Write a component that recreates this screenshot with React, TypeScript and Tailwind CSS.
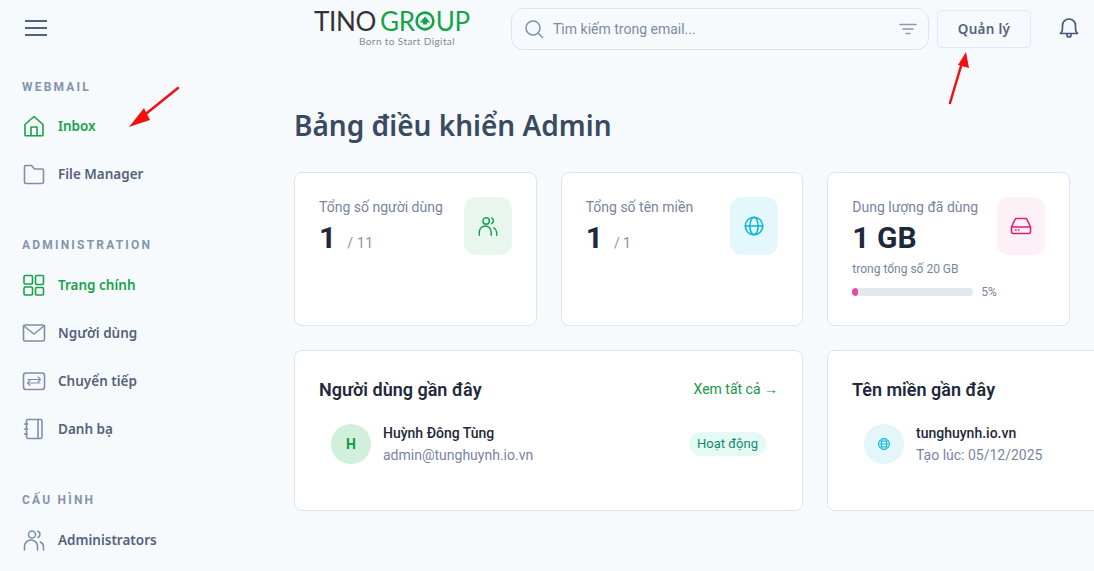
import React from "react";

const navFont = "font-['Noto_Sans','Open_Sans',sans-serif]";

function Ico({ children, size = 24, className = "" }: { children: React.ReactNode; size?: number; className?: string }) {
  return (
    <svg width={size} height={size} viewBox="0 0 24 24" fill="none" stroke="currentColor" strokeWidth="1.6" strokeLinecap="round" strokeLinejoin="round" className={className}>
      {children}
    </svg>
  );
}

const HomeI = () => (
  <Ico><path d="M3 10.5 12 2.5l9 8V21a.8.8 0 0 1-.8.8H3.800A.8.800 0 0 1 3 21z" /><path d="M9 21.500V13h6v8.500" /></Ico>
);
const FolderI = () => (
  <Ico><path d="M2.500 5a1.500 1.500 0 0 1 1.500-1.500h5.500l3 3.500H20a1.500 1.500 0 0 1 1.500 1.500V20a1.500 1.500 0 0 1-1.500 1.500H4A1.500 1.500 0 0 1 2.500 20z" /></Ico>
);
const GridI = () => (
  <Ico>
    <rect x="2" y="2.500" width="8.500" height="8.500" rx="1.200" />
    <rect x="13.500" y="2.500" width="8" height="9" rx="1.200" />
    <rect x="2" y="14" width="8.500" height="8" rx="1.200" />
    <rect x="13.500" y="14.500" width="8" height="7.500" rx="1.200" />
  </Ico>
);
const MailI = () => (
  <Ico><rect x="1.500" y="4" width="21" height="16" rx="1.500" /><path d="m2 5 10 8 10-8" /></Ico>
);
const ForwardI = () => (
  <Ico>
    <rect x="1.500" y="4" width="21" height="16.500" rx="2.500" />
    <path d="M6 14h12M8 11.500 5.500 14 8 16.500" strokeWidth="1.100" />
    <path d="M6 10.500h12M16 8l2.500 2.500L16 13" strokeWidth="1.100" />
  </Ico>
);
const BookI = () => (
  <Ico>
    <rect x="4.500" y="2.500" width="15.500" height="19" rx="1.500" />
    <path d="M16 2.500v19M2.500 7h3M2.500 12h3M2.500 17h3" />
  </Ico>
);
const UsersI = ({ size = 24 }: { size?: number }) => (
  <Ico size={size}>
    <circle cx="10" cy="6.500" r="3.500" />
    <path d="M2.500 22v-3.500a6.500 6.500 0 0 1 13 0V22" />
    <path d="M16 3.200a3.500 3.500 0 0 1 0 6.300M18.500 14a6 6 0 0 1 3 5v3" />
  </Ico>
);

function NavItem({ icon, label, active }: { icon: React.ReactNode; label: string; active?: boolean }) {
  return (
    <div className={`flex h-12 items-center gap-[12px] text-[13.500px] font-semibold ${active ? "text-[#16a34a]" : "text-[#56627d]"}`}>
      <span className={`flex w-[24px] justify-center ${active ? "text-[#16a34a]" : "text-[#7f8fab]"}`}>{icon}</span>
      {label}
    </div>
  );
}

function SectionLabel({ children, className = "" }: { children: React.ReactNode; className?: string }) {
  return <div className={`h-4 text-[12px] leading-4 font-bold tracking-[2.200px] text-[#8494ad] font-['Roboto',sans-serif] ${className}`}>{children}</div>;
}

function StatCard({ label, children, icon, tint }: { label: string; children: React.ReactNode; icon: React.ReactNode; tint: string }) {
  return (
    <div className="flex h-[154px] items-start justify-between rounded-lg border border-[#dfe3ef] bg-white pt-[24px] pr-[24px] pl-[24px]">
      <div className="min-w-0 flex-1">
        <div className="text-[14px] leading-[20px] text-[#77859f]">{label}</div>
        {children}
      </div>
      <div className={`flex h-[58px] w-[48px] shrink-0 items-center justify-center rounded-xl ${tint}`}>{icon}</div>
    </div>
  );
}

export default function App() {
  return (
    <div className="relative h-[571px] w-[1094px] overflow-hidden bg-[#f7fafd] font-['Roboto',sans-serif]">
      <header className="flex h-[56px] items-start">
        <div className="flex w-[294px] pt-[20px] pl-[25px]">
          <div className="flex h-[16px] w-[22px] flex-col justify-between">
            <span className="h-[2px] bg-[#4f6284]" />
            <span className="h-[2px] bg-[#4f6284]" />
            <span className="h-[2px] bg-[#4f6284]" />
          </div>
        </div>
        <div className="flex w-[217px] flex-col pt-[9px] pl-[20px]">
          <div className="flex h-[24px] items-center text-[26px] leading-[24px] font-['Lato',sans-serif] font-normal tracking-[-0.300px]">
            <span className="text-[#333333]">TINO</span>
            <span className="ml-[4px] text-[#16a34a]">GR</span>
            <svg width="20" height="20" viewBox="0 0 20 20" className="mx-[0.500px]">
              <circle cx="10" cy="10" r="8.400" fill="none" stroke="#16a34a" strokeWidth="2.600" />
              <path d="M4.800 11.500 10 5.500l5.200 6H12v2H8v-2z" fill="#16a34a" />
            </svg>
            <span className="text-[#16a34a]">UP</span>
          </div>
          <div className="mt-[2px] pl-[45px] text-[10px] leading-[12px] tracking-[0.400px] text-[#85888d] font-['Lato',sans-serif]">Born to Start Digital</div>
        </div>
        <div className="mt-[8px] flex h-[42px] w-[418px] items-center rounded-xl border border-[#dde3ee] pr-[11px] pl-[12px]">
          <svg width="20" height="20" viewBox="0 0 20 20" fill="none" stroke="#7e93b2" strokeWidth="1.500" strokeLinecap="round">
            <circle cx="9" cy="9" r="7" />
            <path d="m14 14 4.500 4.500" />
          </svg>
          <span className="ml-[9px] flex-1 text-[14px] text-[#7d8ba3]">Tìm kiếm trong email...</span>
          <svg width="18" height="12" viewBox="0 0 18 12" fill="none" stroke="#8e9aae" strokeWidth="1.500" strokeLinecap="round">
            <path d="M1 1.500h16M4 6h10M7 10.500h4" />
          </svg>
        </div>
        <div className={`mt-[10px] ml-[8px] flex h-[38px] w-[94px] items-center justify-center rounded-[4px] border border-[#e3e8f1] text-[13.500px] font-semibold tracking-[0.300px] text-[#56627d] ${navFont}`}>Quản lý</div>
        <div className="mt-[17px] ml-[28px] text-[#46597a]">
          <svg width="20" height="22" viewBox="0 0 20 22" fill="none" stroke="currentColor" strokeWidth="1.700" strokeLinecap="round" strokeLinejoin="round">
            <path d="M1.500 16.500c1.500-1 2-2.500 2-5V8.500a6.500 6.500 0 0 1 13 0v3c0 2.500.5 4 2 5z" />
            <path d="M8 17v1a2 2 0 0 0 4 0v-1" />
          </svg>
        </div>
      </header>

      <div className="flex">
        <aside className={`w-[270px] shrink-0 pt-[23px] pl-[22px] ${navFont}`}>
          <SectionLabel className="mb-[7px]">WEBMAIL</SectionLabel>
          <NavItem active icon={<HomeI />} label="Inbox" />
          <NavItem icon={<FolderI />} label="File Manager" />
          <SectionLabel className="mt-[39px] mb-2">ADMINISTRATION</SectionLabel>
          <NavItem active icon={<GridI />} label="Trang chính" />
          <NavItem icon={<MailI />} label="Người dùng" />
          <NavItem icon={<ForwardI />} label="Chuyển tiếp" />
          <NavItem icon={<BookI />} label="Danh bạ" />
          <SectionLabel className="mt-[39px] mb-2">CẤU HÌNH</SectionLabel>
          <NavItem icon={<UsersI />} label="Administrators" />
        </aside>

        <main className="shrink-0 pt-[48px] pl-[24px]">
          <h1 className={`text-[28px] leading-[42px] font-semibold text-[#394a63] ${navFont}`}>Bảng điều khiển Admin</h1>
          <div className="mt-[26px] grid w-[776px] grid-cols-3 gap-[24px]">
            <StatCard label="Tổng số người dùng" tint="bg-[#e9f6ee]" icon={<span className="text-[#16a34a]"><UsersI size={22} /></span>}>
              <div className="mt-[3px] flex items-baseline">
                <span className="text-[30px] leading-[36px] font-bold text-[#1e293b]">1</span>
                <span className="ml-[11px] text-[14px] tracking-[0.300px] text-[#8494ad]">/ 11</span>
              </div>
            </StatCard>
            <StatCard label="Tổng số tên miền" tint="bg-[#e3f7fc]" icon={
              <span className="text-[#06b6d4]"><Ico size={22}><circle cx="12" cy="12" r="9.500" /><ellipse cx="12" cy="12" rx="4.500" ry="9.500" /><path d="M2.500 12h19" /></Ico></span>
            }>
              <div className="mt-[3px] flex items-baseline">
                <span className="text-[30px] leading-[36px] font-bold text-[#1e293b]">1</span>
                <span className="ml-[11px] text-[14px] text-[#8494ad]">/ 1</span>
              </div>
            </StatCard>
            <StatCard label="Dung lượng đã dùng" tint="bg-[#fdf1f7]" icon={
              <span className="text-[#e11d74]"><Ico size={24}><path d="M2.500 13 6 5.500a1.500 1.500 0 0 1 1.400-1h9.200a1.500 1.500 0 0 1 1.400 1L21.500 13v5a1.500 1.500 0 0 1-1.500 1.500H4A1.500 1.500 0 0 1 2.500 18z" /><path d="M2.500 13h19M6.500 16h.500M9.500 16h.500" /></Ico></span>
            }>
              <div className="mt-[3px] text-[30px] leading-[36px] font-bold text-[#1e293b]">1 GB</div>
              <div className="mt-[5px] text-[12px] leading-[16px] text-[#77859f]">trong tổng số 20 GB</div>
              <div className="mt-[7px] flex items-center">
                <div className="h-[8px] w-[121px] overflow-hidden rounded-full bg-[#e2e8f0]">
                  <div className="h-full w-[5%] rounded-full bg-[#ec4899]" />
                </div>
                <span className="ml-[8px] text-[12px] leading-[16px] text-[#77859f]">5%</span>
              </div>
            </StatCard>
          </div>
          <div className="mt-[24px] flex gap-[24px]">
            <section className="h-[161px] w-[509px] shrink-0 rounded-lg border border-[#dfe3ef] bg-white px-[24px] pt-[24px]">
              <div className="flex h-[28px] items-center justify-between">
                <h2 className="text-[18px] font-semibold text-[#1e293b]">Người dùng gần đây</h2>
                <span className="text-[14px] text-[#15964a]">Xem tất cả →</span>
              </div>
              <div className="mt-[14px] flex items-center px-[12px] py-[6px]">
                <div className="flex h-[40px] w-[40px] items-center justify-center rounded-full bg-[#d1f0dc] text-[14px] font-bold text-[#16964a]">H</div>
                <div className="ml-[12px] flex-1">
                  <div className="text-[14px] leading-[20px] font-medium text-[#1e293b]">Huỳnh Đông Tùng</div>
                  <div className="mt-[2px] text-[14px] leading-[20px] text-[#77859f]">admin@tunghuynh.io.vn</div>
                </div>
                <span className="rounded-full bg-[#e6faf5] px-[8px] py-[3px] text-[13px] leading-[18px] text-[#0f8a6c]">Hoạt động</span>
              </div>
            </section>
            <section className="h-[161px] w-[509px] shrink-0 rounded-lg border border-[#dfe3ef] bg-white px-[24px] pt-[24px]">
              <div className="flex h-[28px] items-center">
                <h2 className="text-[18px] font-semibold text-[#1e293b]">Tên miền gần đây</h2>
              </div>
              <div className="mt-[14px] flex items-center px-[12px] py-[6px]">
                <div className="flex h-[40px] w-[40px] items-center justify-center rounded-full bg-[#e3f7fb] text-[#06b6d4]">
                  <Ico size={14}><circle cx="12" cy="12" r="9.500" /><ellipse cx="12" cy="12" rx="4.500" ry="9.500" /><path d="M2.500 12h19M4 7h16M4 17h16" /></Ico>
                </div>
                <div className="ml-[12px] flex-1">
                  <div className="text-[14px] leading-[20px] font-medium text-[#1e293b]">tunghuynh.io.vn</div>
                  <div className="mt-[2px] text-[14px] leading-[20px] text-[#77859f]">Tạo lúc: 05/12/2025</div>
                </div>
              </div>
            </section>
          </div>
        </main>
      </div>

      {/* red annotation arrows */}
      <svg width="1094" height="571" className="pointer-events-none absolute top-0 left-0">
        <path d="M178 88 142 117" stroke="#f50f0f" strokeWidth="2.500" strokeLinecap="round" />
        <path d="M129 127 144 108 150 120z" fill="#f50f0f" />
        <path d="M950 103 961 66" stroke="#f50f0f" strokeWidth="2.500" strokeLinecap="round" />
        <path d="M966 52 969 68 958 65z" fill="#f50f0f" />
      </svg>
    </div>
  );
}
